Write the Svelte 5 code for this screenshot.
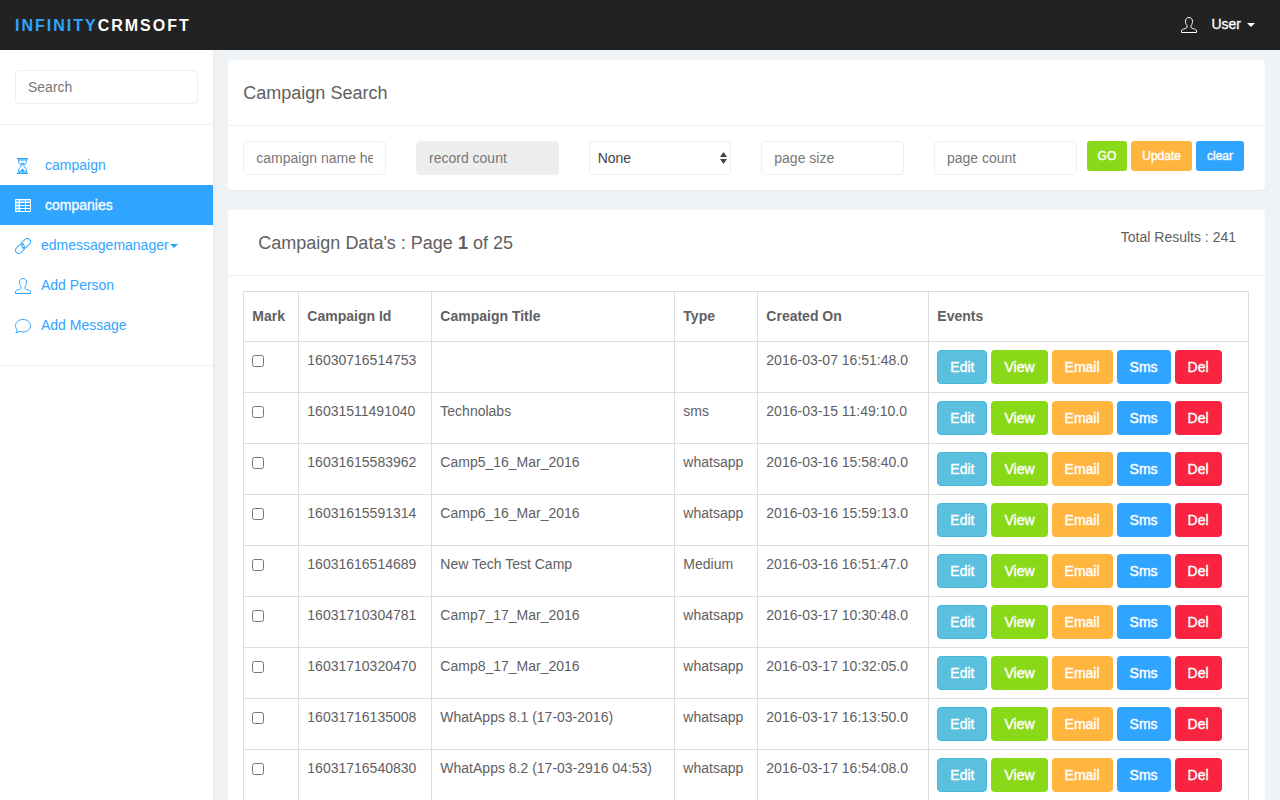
<script>
  const menu = [
    { label: 'campaign', icon: 'hourglass', wide: true },
    { label: 'companies', icon: 'table', wide: true, active: true },
    { label: 'edmessagemanager', icon: 'link', caret: true },
    { label: 'Add Person', icon: 'user' },
    { label: 'Add Message', icon: 'message' }
  ];

  const campaigns = [
    { id: '16030716514753', title: '', type: '', created: '2016-03-07 16:51:48.0' },
    { id: '16031511491040', title: 'Technolabs', type: 'sms', created: '2016-03-15 11:49:10.0' },
    { id: '16031615583962', title: 'Camp5_16_Mar_2016', type: 'whatsapp', created: '2016-03-16 15:58:40.0' },
    { id: '16031615591314', title: 'Camp6_16_Mar_2016', type: 'whatsapp', created: '2016-03-16 15:59:13.0' },
    { id: '16031616514689', title: 'New Tech Test Camp', type: 'Medium', created: '2016-03-16 16:51:47.0' },
    { id: '16031710304781', title: 'Camp7_17_Mar_2016', type: 'whatsapp', created: '2016-03-17 10:30:48.0' },
    { id: '16031710320470', title: 'Camp8_17_Mar_2016', type: 'whatsapp', created: '2016-03-17 10:32:05.0' },
    { id: '16031716135008', title: 'WhatApps 8.1 (17-03-2016)', type: 'whatsapp', created: '2016-03-17 16:13:50.0' },
    { id: '16031716540830', title: 'WhatApps 8.2 (17-03-2916 04:53)', type: 'whatsapp', created: '2016-03-17 16:54:08.0' }
  ];

  const actions = [
    { label: 'Edit', tone: 'info' },
    { label: 'View', tone: 'success' },
    { label: 'Email', tone: 'warning' },
    { label: 'Sms', tone: 'primary' },
    { label: 'Del', tone: 'danger' }
  ];
</script>

{#snippet icon(name)}
  <svg class="icon" viewBox="0 0 16 16" aria-hidden="true">
    {#if name === 'hourglass'}
      <path class="tint" d="M2 0h11v2H2zM2 14h11v2H2z" />
      <path d="M2 .5h11M2 15.5h11M3 2h9M3 14h9M3.500 2c0 3 .8 4.200 3 6-2.200 1.800-3 3-3 6M11.500 2c0 3-.8 4.200-3 6 2.200 1.800 3 3 3 6" />
      <path class="solid" d="M5 5h5L7.500 7.500zM7.500 10.500l3 3h-6z" />
    {:else if name === 'table'}
      <path class="tint" d="M0 1h16v3.500H0zM0 1h5v13H0z" />
      <path d="M.5 1.500h15v12H.5zM.5 4.500h15M.5 7.500h15M.5 10.500h15M4.500 1.500v12M10.500 1.500v12" />
    {:else if name === 'link'}
      <g transform="rotate(-45 8 8)">
        <path d="M5.800 9.500H8a1.800 1.800 0 0 0 1.200-1.500c0-1.900-1.400-3.200-3.200-3.200H2A3.200 3.200 0 0 0 2 11.200h4c1 0 1.700-.3 2.300-.9" />
        <path d="M10.200 6.500H8A1.800 1.800 0 0 0 6.800 8c0 1.900 1.400 3.200 3.200 3.200h4a3.200 3.200 0 0 0 0-6.400h-4c-1 0-1.700.3-2.300.9" />
      </g>
    {:else if name === 'user'}
      <path d="M8 .5c2.200 0 3.500 1.500 3.500 3.700 0 2-.6 3.200-1.500 4.300v1.700c0 .6.5.9 1.500 1.200 2.500.7 4 1.100 4 2.600v1.500H.5V14c0-1.500 1.500-1.900 4-2.600 1-.3 1.500-.6 1.500-1.200V8.500C5.100 7.400 4.500 6.200 4.500 4.200 4.500 2 5.800.5 8 .5z" />
    {:else}
      <path d="M8 1.500c4.200 0 7.500 2.700 7.500 6.200S12.200 14 8 14c-1.200 0-2.300-.2-3.300-.6-1 .8-2.300 1.100-3.900 1.100.8-.7 1.300-1.600 1.400-2.700C1.100 10.700.5 9.300.5 7.700.5 4.200 3.800 1.500 8 1.500z" />
    {/if}
  </svg>
{/snippet}

<header class="topbar">
  <a class="brand" href="#home"><span>INFINITY</span>CRMSOFT</a>
  <button class="account" type="button">{@render icon('user')}User<i class="caret"></i></button>
</header>

<div class="layout">
  <aside class="sidebar">
    <div class="search"><input class="control" type="text" placeholder="Search" aria-label="Search" /></div>
    <nav>
      {#each menu as item}
        <a href="#{item.label}" class:active={item.active} class:wide={item.wide}>
          {@render icon(item.icon)}<span>{item.label}</span>{#if item.caret}<i class="caret"></i>{/if}
        </a>
      {/each}
    </nav>
  </aside>

  <main>
    <section class="panel">
      <div class="panel-head"><h2>Campaign Search</h2></div>
      <form class="filters" onsubmit={(e) => e.preventDefault()}>
        <div class="fields">
          <input class="control" type="text" placeholder="campaign name here" aria-label="Campaign name" />
          <input class="control" type="text" placeholder="record count" aria-label="Record count" disabled />
          <div class="select">
            <select class="control" aria-label="Campaign type">
              <option>None</option>
            </select>
            <svg viewBox="0 0 7 12" aria-hidden="true"><path d="M3.500 0L7 5H0zM0 7h7l-3.500 5z" /></svg>
          </div>
          <input class="control" type="text" placeholder="page size" aria-label="Page size" />
          <input class="control" type="text" placeholder="page count" aria-label="Page count" />
        </div>
        <div class="buttons">
          <button class="btn small success" type="submit">GO</button>
          <button class="btn small warning" type="button">Update</button>
          <button class="btn small primary" type="reset">clear</button>
        </div>
      </form>
    </section>

    <section class="panel">
      <div class="panel-head results">
        <h2>Campaign Data's : Page <b>1</b> of 25</h2>
        <span class="total">Total Results : 241</span>
      </div>
      <div class="panel-body">
        <table>
          <colgroup>
            <col class="c-mark" /><col class="c-id" /><col class="c-title" /><col class="c-type" /><col class="c-created" /><col />
          </colgroup>
          <thead>
            <tr><th>Mark</th><th>Campaign Id</th><th>Campaign Title</th><th>Type</th><th>Created On</th><th>Events</th></tr>
          </thead>
          <tbody>
            {#each campaigns as row}
              <tr>
                <td><input type="checkbox" aria-label="Mark {row.id}" /></td>
                <td>{row.id}</td>
                <td>{row.title}</td>
                <td>{row.type}</td>
                <td>{row.created}</td>
                <td>
                  <div class="actions">
                    {#each actions as action}
                      <button class="btn {action.tone}" type="button">{action.label}</button>
                    {/each}
                  </div>
                </td>
              </tr>
            {/each}
          </tbody>
        </table>
      </div>
    </section>
  </main>
</div>

<style>
  :global(body) {
    background: #eff3f6;
    color: #5f6062;
    font: 14px/20px "Liberation Sans", Arial, sans-serif;
  }
  :global(#app) {
    height: 100vh;
    overflow: hidden;
    display: flex;
    flex-direction: column;
  }
  :global(#app) *, :global(#app) {
    box-sizing: border-box;
  }
  a {
    color: #30a5ff;
    text-decoration: none;
  }
  button, input, select {
    font: inherit;
  }
  .icon {
    width: 16px;
    height: 16px;
    margin-top: 2px;
    flex: none;
    fill: none;
    stroke: currentColor;
  }
  .icon .solid {
    fill: currentColor;
    stroke: none;
  }
  .icon .tint {
    fill: currentColor;
    fill-opacity: 0.4;
    stroke: none;
  }
  .caret {
    width: 0;
    border: 4px solid transparent;
    border-top-color: currentColor;
    border-bottom: 0;
  }

  .topbar {
    flex: none;
    height: 50px;
    padding: 0 25px 0 15px;
    display: flex;
    align-items: center;
    justify-content: space-between;
    background: #222;
  }
  .brand {
    padding-top: 2px;
    color: #fff;
    font-size: 16px;
    font-weight: bold;
    letter-spacing: 2px;
  }
  .brand span {
    color: #30a5ff;
  }
  .account {
    display: flex;
    align-items: center;
    padding: 0 0 2px;
    border: 0;
    background: none;
    color: #fff;
    -webkit-text-stroke: 0.3px;
  }
  .account .icon {
    margin-right: 14px;
  }
  .account .caret {
    margin-top: 2px;
    margin-left: 6px;
  }

  .layout {
    flex: 1;
    min-height: 0;
    display: grid;
    grid-template-columns: 1fr 5fr;
  }
  .sidebar {
    background: #fff;
    box-shadow: 1px 0 6px rgba(0, 0, 0, 0.04);
  }
  .search {
    padding: 20px 15px;
    border-bottom: 1px solid #eee;
  }
  .control {
    width: 100%;
    min-width: 0;
    height: 34px;
    padding: 6px 12px;
    border: 1px solid #eee;
    border-radius: 4px;
    background: #fff;
    color: #444;
  }
  .control::placeholder {
    color: #777;
  }
  .control:disabled {
    background: #eee;
  }
  nav {
    padding: 20px 0;
    border-bottom: 1px solid #eee;
  }
  nav a {
    display: flex;
    align-items: center;
    height: 40px;
    padding: 0 15px;
    gap: 10px;
  }
  nav a.wide {
    gap: 14px;
  }
  nav a.active {
    background: #30a5ff;
    color: #fff;
  }
  nav a.active span {
    -webkit-text-stroke: 0.3px;
  }
  nav .caret {
    margin-top: 2px;
    margin-left: -9px;
  }

  main {
    min-width: 0;
    padding: 10px 15px 0;
    overflow: hidden;
  }
  .panel {
    margin-bottom: 20px;
    border-radius: 4px;
    background: #fff;
    box-shadow: 0 1px 1px rgba(0, 0, 0, 0.05);
  }
  .panel-head {
    height: 66px;
    padding: 0 15px;
    display: flex;
    align-items: center;
    border-bottom: 1px solid #eee;
  }
  .panel-head.results {
    padding: 0 29px 0 30px;
    justify-content: space-between;
  }
  h2 {
    margin: 0;
    font-size: 18px;
    font-weight: normal;
  }
  .total {
    align-self: flex-start;
    padding-top: 17px;
  }
  .filters {
    display: flex;
    padding: 15px;
  }
  .fields {
    flex: 1;
    display: grid;
    grid-template-columns: repeat(5, minmax(0, 1fr));
    gap: 30px;
  }
  .select {
    position: relative;
  }
  .select select {
    appearance: none;
    padding: 6px 8px;
  }
  .select svg {
    position: absolute;
    right: 4px;
    top: 11px;
    width: 7px;
    height: 12px;
    fill: #444;
    pointer-events: none;
  }
  .buttons {
    flex: none;
    display: flex;
    gap: 4px;
    margin: 0 6px 0 10px;
  }
  .btn {
    height: 34px;
    padding: 0 12px;
    border: 1px solid transparent;
    border-radius: 4px;
    color: #fff;
    -webkit-text-stroke: 0.4px;
  }
  .btn.small {
    height: 30px;
    padding: 0 10px;
    border-radius: 3px;
    font-size: 12px;
  }
  .info {
    background: #5bc0de;
    border-color: #46b8da;
  }
  .success {
    background: #8ad919;
  }
  .warning {
    background: #ffb53e;
  }
  .primary {
    background: #30a5ff;
  }
  .danger {
    background: #f9243f;
  }

  .panel-body {
    padding: 15px 16px 15px 15px;
  }
  table {
    width: 100%;
    border-collapse: collapse;
    table-layout: fixed;
  }
  .c-mark { width: 55px; }
  .c-id { width: 133px; }
  .c-title { width: 243px; }
  .c-type { width: 83px; }
  .c-created { width: 171px; }
  th, td {
    padding: 8px;
    border: 1px solid #ddd;
    text-align: left;
    vertical-align: top;
  }
  th {
    height: 50px;
    padding: 0 8px 2px;
    vertical-align: middle;
  }
  td input {
    display: block;
    width: 12px;
    height: 12px;
    margin: 5px 0 0;
  }
  .actions {
    display: flex;
    gap: 4px;
  }
</style>
